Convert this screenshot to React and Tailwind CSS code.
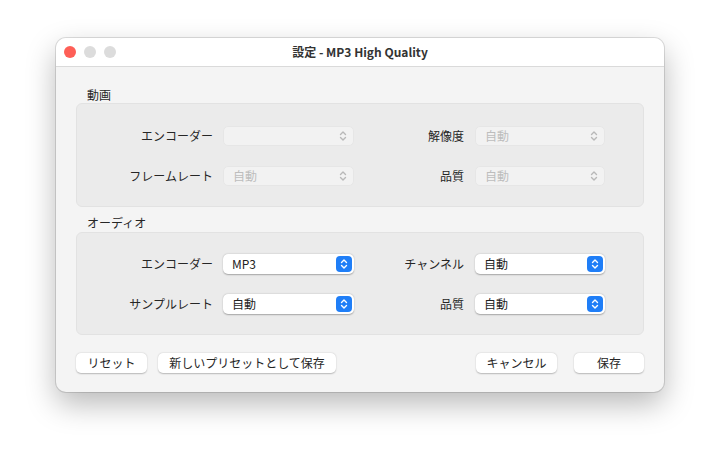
import React from 'react';

const font = { fontFamily: '"Noto Sans CJK JP", "Noto Sans", sans-serif' };

function Chevrons({ className }) {
  return (
    <svg width="8" height="12" viewBox="0 0 8 12" className={className} fill="none" stroke="currentColor" strokeWidth="1.4" strokeLinecap="round" strokeLinejoin="round">
      <path d="M1.5 4.5 L4 2 L6.5 4.5" />
      <path d="M1.5 7.5 L4 10 L6.5 7.5" />
    </svg>
  );
}

function Select({ value, disabled, width }) {
  if (disabled) {
    return (
      <div className={`${width} h-[20px] rounded-[5px] bg-[#f2f2f2] border border-[#e6e6e6] flex items-center pl-[9px] pr-[6px]`}>
        <span className="flex-1 text-[12px] text-[#bdbdbd] leading-none">{value}</span>
        <Chevrons className="text-[#b8b8b8]" />
      </div>
    );
  }
  return (
    <div className={`${width} h-[20px] rounded-[5px] bg-white shadow-[0_0.5px_1.5px_rgba(0,0,0,0.3)] flex items-center pl-[9px] pr-[2px]`}>
      <span className="flex-1 text-[12px] text-[#222] leading-none">{value}</span>
      <div className="w-[16px] h-[16px] rounded-[4px] bg-[#1f7ef7] flex items-center justify-center">
        <Chevrons className="text-white" />
      </div>
    </div>
  );
}

function Row({ l1, v1, l2, v2, disabled }) {
  return (
    <div className="flex items-center h-[20px]">
      <div className="w-[146px] text-right text-[12px] text-[#262626] pr-[10px]">{l1}</div>
      <Select value={v1} disabled={disabled} width="w-[131px]" />
      <div className="w-[121px] text-right text-[12px] text-[#262626] pr-[11px]">{l2}</div>
      <Select value={v2} disabled={disabled} width="w-[130px]" />
    </div>
  );
}

function Button({ children, width }) {
  return (
    <div className={`${width} h-[20px] rounded-[5px] bg-white shadow-[0_0.5px_1.5px_rgba(0,0,0,0.25)] flex items-center justify-center text-[12px] text-[#262626]`}>
      {children}
    </div>
  );
}

export default function App() {
  return (
    <div className="w-[720px] h-[466px] bg-white pt-[38px] pl-[56px]" style={font}>
      <div className="w-[608px] h-[354px] rounded-[10px] overflow-hidden bg-[#f4f4f4] shadow-[0_12px_30px_rgba(0,0,0,0.28),0_0_0_1px_rgba(0,0,0,0.12)] flex flex-col">
        {/* title bar */}
        <div className="relative h-[29px] bg-white border-b border-[#dadada] flex items-center justify-center">
          <div className="absolute left-[8px] top-[8px] flex gap-[8px]">
            <span className="w-[12px] h-[12px] rounded-full bg-[#fe5f57]" />
            <span className="w-[12px] h-[12px] rounded-full bg-[#dcdcdc]" />
            <span className="w-[12px] h-[12px] rounded-full bg-[#dcdcdc]" />
          </div>
          <span className="text-[12px] font-bold text-[#333]">設定 - MP3 High Quality</span>
        </div>

        <div className="px-[20px] pt-[21px] flex flex-col">
          <div className="text-[12px] text-[#262626] pl-[11px] leading-[14px] mb-[1px]">動画</div>
          <div className="h-[104px] rounded-[6px] bg-[#ebebeb] border border-[#e2e2e2] pt-[22px] flex flex-col gap-[20px]">
            <Row l1="エンコーダー" v1="" l2="解像度" v2="自動" disabled />
            <Row l1="フレームレート" v1="自動" l2="品質" v2="自動" disabled />
          </div>

          <div className="text-[12px] text-[#262626] pl-[11px] leading-[14px] mt-[9px] mb-[2px]">オーディオ</div>
          <div className="h-[103px] rounded-[6px] bg-[#ebebeb] border border-[#e2e2e2] pt-[21px] flex flex-col gap-[20px]">
            <Row l1="エンコーダー" v1="MP3" l2="チャンネル" v2="自動" />
            <Row l1="サンプルレート" v1="自動" l2="品質" v2="自動" />
          </div>

          <div className="mt-[18px] flex items-center">
            <Button width="w-[71px]">リセット</Button>
            <div className="w-[11px]" />
            <Button width="w-[178px]">新しいプリセットとして保存</Button>
            <div className="flex-1" />
            <Button width="w-[81px]">キャンセル</Button>
            <div className="w-[17px]" />
            <Button width="w-[70px]">保存</Button>
          </div>
        </div>
      </div>
    </div>
  );
}
